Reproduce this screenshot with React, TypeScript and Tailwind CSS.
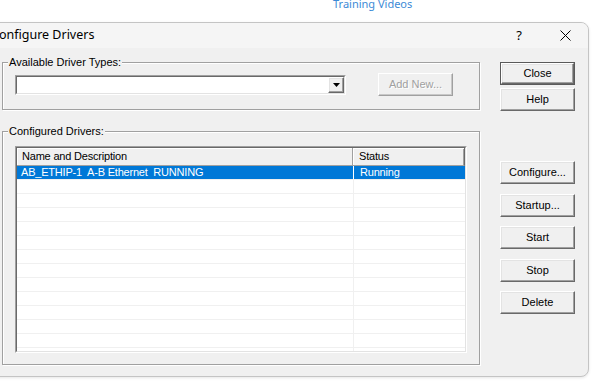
import React from "react";

const raised =
  "border border-t-white border-l-white border-r-[#696969] border-b-[#696969] shadow-[inset_-1px_-1px_0_#a0a0a0,inset_1px_1px_0_#e3e3e3] bg-[#f0f0f0]";

function Btn({
  label,
  def,
  disabled,
  className = "",
}: {
  label: string;
  def?: boolean;
  disabled?: boolean;
  className?: string;
}) {
  if (def) {
    return (
      <div className={"w-[75px] h-[23px] border border-[#5a5a5a] flex " + className}>
        <div className={"flex-1 flex items-center justify-center text-[11px] text-black " + raised}>
          {label}
        </div>
      </div>
    );
  }
  return (
    <div
      className={
        "w-[75px] h-[23px] flex items-center justify-center text-[11px] " +
        (disabled
          ? "border border-t-white border-l-white border-r-[#a0a0a0] border-b-[#a0a0a0] shadow-[inset_-1px_-1px_0_#c8c8c8] bg-[#f0f0f0] text-[#a0a0a0] [text-shadow:1px_1px_0_#fff] "
          : raised + " text-black ") +
        className
      }
    >
      {label}
    </div>
  );
}

function Group({
  label,
  className = "",
  children,
}: {
  label: string;
  className?: string;
  children?: React.ReactNode;
}) {
  return (
    <div
      className={
        "relative w-[478px] border border-[#a0a0a0] shadow-[inset_1px_1px_0_#fff,1px_1px_0_#fff] " +
        className
      }
    >
      <div className="absolute left-[5px] top-[-7px] px-[1px] bg-[#f0f0f0] text-[11px] leading-[13px] text-black">
        {label}
      </div>
      {children}
    </div>
  );
}

export default function App() {
  const rows = Array.from({ length: 14 });
  return (
    <div className="w-[603px] h-[390px] overflow-hidden bg-white font-['Liberation_Sans',Arial,sans-serif]">
      <div className="h-[22px] pl-[333px] flex items-start">
        <div className="-mt-[3px] text-[11px] leading-[14px] text-[#3c8ad6] font-['Noto_Sans',sans-serif]">
          Training Videos
        </div>
      </div>
      <div className="-ml-[16px] w-[605px] h-[355px] border border-[#c4c4c4] rounded-[8px] bg-[#f0f0f0] flex flex-col overflow-hidden shadow-[0_1px_3px_rgba(0,0,0,0.1)]">
        <div className="h-[25px] bg-[#f5f5f5] flex items-center">
          <div className="flex-1 pl-[6px] text-[12.5px] text-black font-['Noto_Sans',sans-serif]">
            Configure Drivers
          </div>
          <div className="w-[46px] h-full flex items-center justify-center text-[13px] text-black font-['Noto_Sans',sans-serif]">
            ?
          </div>
          <div className="w-[46px] h-full flex items-center justify-center">
            <svg width="11" height="11" viewBox="0 0 11 11">
              <path d="M0.5 0.5L10.5 10.5M10.5 0.5L0.5 10.5" stroke="#000" strokeWidth="1" />
            </svg>
          </div>
        </div>
        <div className="flex pl-[17px]">
          <div className="w-[478px] flex flex-col">
            <Group label="Available Driver Types:" className="mt-[14px] h-[48px]">
              <div className="flex items-start pl-[12px] pt-[10px]">
                <div className="mt-[2px] w-[331px] h-[20px] border border-t-[#a0a0a0] border-l-[#a0a0a0] border-r-white border-b-white">
                  <div className="h-full flex justify-end bg-white border border-t-[#696969] border-l-[#696969] border-r-[#e3e3e3] border-b-[#e3e3e3]">
                    <div className={"w-[16px] h-full flex items-center justify-center " + raised}>
                      <svg width="7" height="4" viewBox="0 0 7 4">
                        <path d="M0 0H7L3.5 4Z" fill="#000" />
                      </svg>
                    </div>
                  </div>
                </div>
                <Btn label="Add New..." disabled className="ml-[32px]" />
              </div>
            </Group>
            <Group label="Configured Drivers:" className="mt-[21px] h-[234px]">
              <div className="pl-[12px] pt-[14px]">
                <div className="w-[452px] h-[207px] border border-t-[#a0a0a0] border-l-[#a0a0a0] border-r-white border-b-white">
                  <div className="h-full bg-white overflow-hidden border border-t-[#696969] border-l-[#696969] border-r-[#e3e3e3] border-b-[#e3e3e3] text-[11px] tracking-[-0.2px]">
                    <div className="flex h-[18px] bg-[#f0f0f0]">
                      <div className="w-[336px] flex items-center pl-[5px] border-r border-b border-r-[#a0a0a0] border-b-[#a0a0a0] shadow-[inset_1px_1px_0_#fff]">
                        Name and Description
                      </div>
                      <div className="w-[112px] flex items-center pl-[6px] border-r border-b border-r-[#696969] border-b-[#a0a0a0] shadow-[inset_1px_1px_0_#fff,inset_-1px_0_0_#a0a0a0]">
                        Status
                      </div>
                    </div>
                    {rows.map((_, i) => (
                      <div
                        key={i}
                        className={
                          "flex h-[14px] border-b border-b-[#f0f0f0] leading-[13px] " +
                          (i === 0 ? "bg-[#0078d7] text-white" : "text-black")
                        }
                      >
                        <div
                          className={
                            "w-[337px] pl-[4px] whitespace-pre border-r " +
                            (i === 0 ? "border-r-white" : "border-r-[#f0f0f0]")
                          }
                        >
                          {i === 0 ? "AB_ETHIP-1  A-B Ethernet  RUNNING" : ""}
                        </div>
                        <div className="flex-1 pl-[6px]">{i === 0 ? "Running" : ""}</div>
                      </div>
                    ))}
                  </div>
                </div>
              </div>
            </Group>
          </div>
          <div className="ml-[20px] flex flex-col">
            <Btn label="Close" def className="mt-[14px]" />
            <Btn label="Help" className="mt-[3px]" />
            <Btn label="Configure..." className="mt-[50px]" />
            <Btn label="Startup..." className="mt-[10px]" />
            <Btn label="Start" className="mt-[9px]" />
            <Btn label="Stop" className="mt-[10px]" />
            <Btn label="Delete" className="mt-[9px]" />
          </div>
        </div>
      </div>
    </div>
  );
}
